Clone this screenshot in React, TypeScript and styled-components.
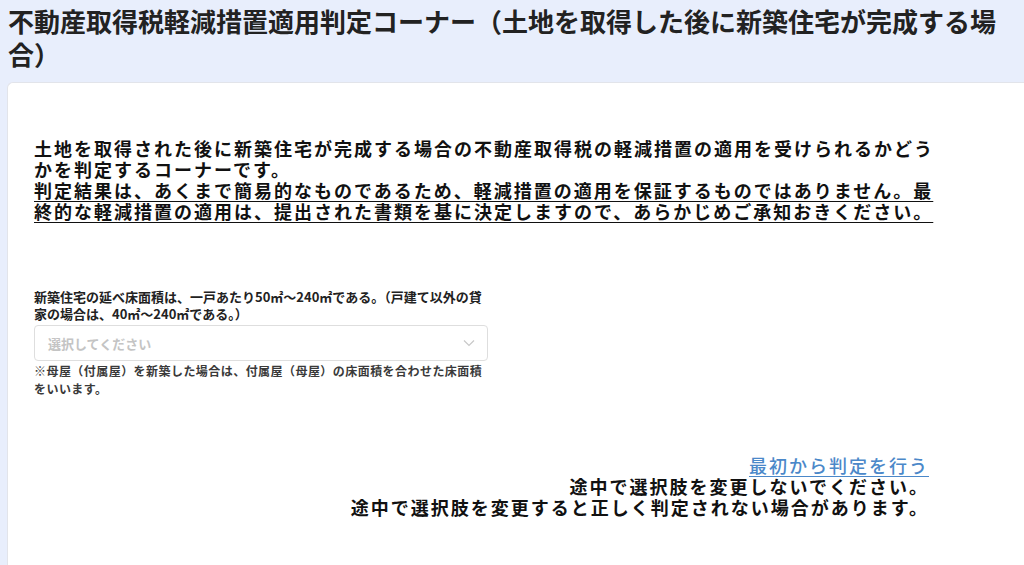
import styled, { createGlobalStyle } from "styled-components";

const GlobalStyle = createGlobalStyle`
  html, body {
    margin: 0;
    padding: 0;
    background: #e8eefc;
    font-family: "Noto Sans CJK JP", "Noto Sans", sans-serif;
    color: #1a1a1a;
  }
`;

const Page = styled.div`
  height: 565px;
  overflow: hidden;
`;

const Title = styled.h1`
  margin: 0;
  padding: 4px 16px 12px 8px;
  font-size: 26px;
  line-height: 33px;
  font-weight: 700;
  color: #222;
`;

const Card = styled.div`
  margin-left: 7px;
  background: #fff;
  border: 1px solid #e2e4ea;
  border-right: none;
  border-radius: 6px 0 0 0;
  padding: 55px 0 60px 26px;
  min-height: 420px;
`;

const Content = styled.div`
  width: 904px;
`;

const Intro = styled.p`
  margin: 0;
  font-size: 18px;
  line-height: 21px;
  letter-spacing: 2px;
  font-weight: 700;
  color: #111;
`;

const Caution = styled.span`
  text-decoration: underline;
  text-underline-offset: 3px;
`;

const Question = styled.div`
  margin-top: 66px;
  width: 454px;
  display: flex;
  flex-direction: column;
`;

const Label = styled.div`
  font-size: 13px;
  line-height: 17px;
  font-weight: 700;
  color: #222;
`;

const Select = styled.div`
  margin-top: 3px;
  height: 36px;
  box-sizing: border-box;
  border: 1px solid #dedede;
  border-radius: 4px;
  display: flex;
  align-items: center;
  justify-content: space-between;
  padding: 0 12px 0 13px;
`;

const Placeholder = styled.span`
  font-size: 13px;
  font-weight: 700;
  color: #c4c4c4;
`;

const Note = styled.div`
  margin-top: 1px;
  font-size: 12px;
  line-height: 18px;
  letter-spacing: 0.45px;
  font-weight: 700;
  color: #3a3a3a;
`;

const Footer = styled.div`
  margin-top: 57px;
  padding-right: 9px;
  display: flex;
  flex-direction: column;
  align-items: flex-end;
  font-size: 18px;
  line-height: 21px;
  letter-spacing: 2px;
  font-weight: 700;
  color: #111;
`;

const RestartLink = styled.a`
  color: #4b88c9;
  text-decoration: underline;
  text-underline-offset: 3px;
  font-weight: 500;
  cursor: pointer;
`;

const Chevron = () => (
  <svg width="12" height="8" viewBox="0 0 12 8" fill="none">
    <path d="M1 1.5l5 5 5-5" stroke="#c8c8c8" strokeWidth="1.2" />
  </svg>
);

export default function App() {
  return (
    <Page>
      <GlobalStyle />
      <Title>
        不動産取得税軽減措置適用判定コーナー（土地を取得した後に新築住宅が完成する場合）
      </Title>
      <Card>
        <Content>
          <Intro>
            土地を取得された後に新築住宅が完成する場合の不動産取得税の軽減措置の適用を受けられるかどうかを判定するコーナーです。
            <br />
            <Caution>
              判定結果は、あくまで簡易的なものであるため、軽減措置の適用を保証するものではありません。最終的な軽減措置の適用は、提出された書類を基に決定しますので、あらかじめご承知おきください。
            </Caution>
          </Intro>
          <Question>
            <Label>
              新築住宅の延べ床面積は、一戸あたり50㎡～240㎡である。（戸建て以外の貸家の場合は、40㎡～240㎡である。）
            </Label>
            <Select>
              <Placeholder>選択してください</Placeholder>
              <Chevron />
            </Select>
            <Note>
              ※母屋（付属屋）を新築した場合は、付属屋（母屋）の床面積を合わせた床面積をいいます。
            </Note>
          </Question>
          <Footer>
            <RestartLink>最初から判定を行う</RestartLink>
            <span>途中で選択肢を変更しないでください。</span>
            <span>途中で選択肢を変更すると正しく判定されない場合があります。</span>
          </Footer>
        </Content>
      </Card>
    </Page>
  );
}
